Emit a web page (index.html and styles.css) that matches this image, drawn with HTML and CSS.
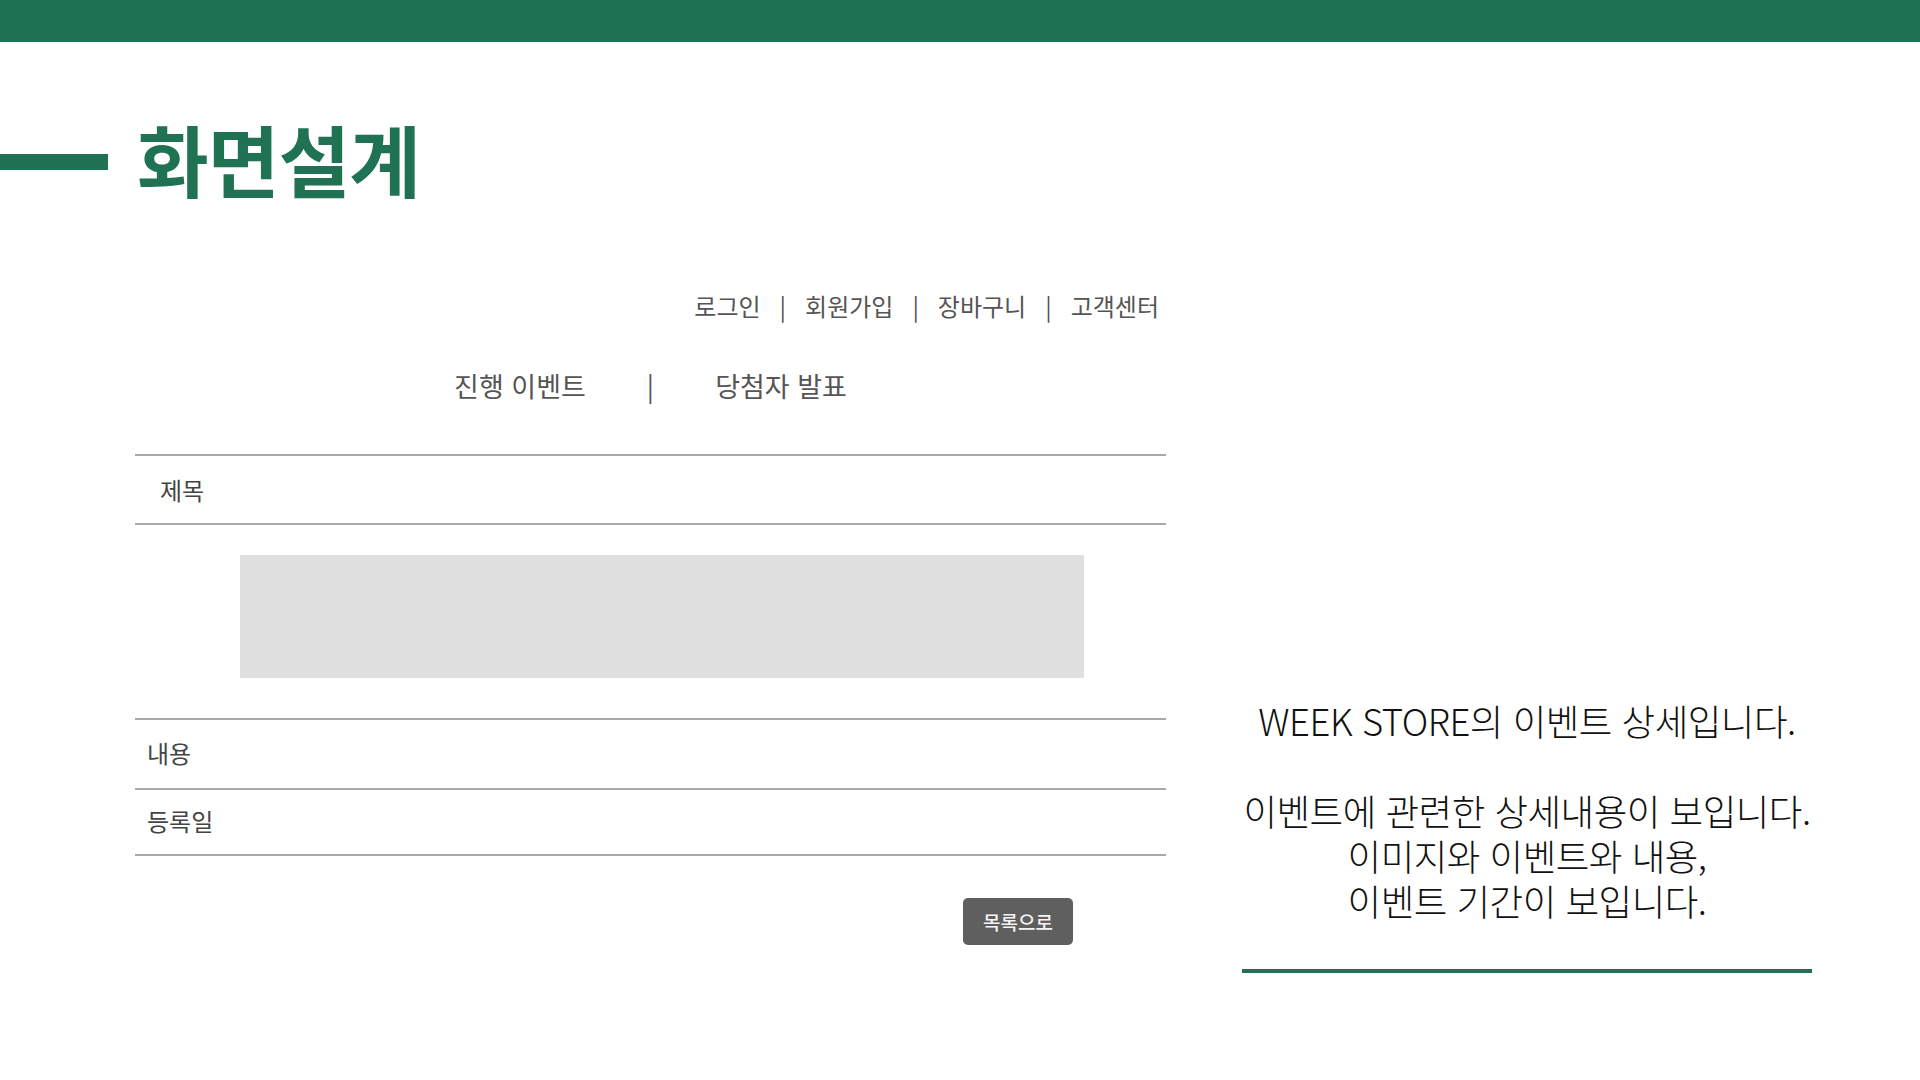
FILE: index.html
```html
<!DOCTYPE html>
<html lang="ko">
<head>
<meta charset="utf-8">
<title>화면설계</title>
<link rel="stylesheet" href="styles.css">
</head>
<body>
<div class="topbar"></div>
<div class="title-row">
  <span class="dash"></span>
  <h1 class="page-title">화면설계</h1>
</div>
<div class="main">
  <section class="wire">
    <nav class="util">
      <span>로그인</span><span class="sep">|</span><span>회원가입</span><span class="sep">|</span><span>장바구니</span><span class="sep">|</span><span>고객센터</span>
    </nav>
    <nav class="tabs">
      <span>진행 이벤트</span><span class="tab-sep">|</span><span>당첨자 발표</span>
    </nav>
    <div class="board">
      <div class="row row-subject">제목</div>
      <div class="row row-image"><div class="image-box"></div></div>
      <div class="row row-content">내용</div>
      <div class="row row-date">등록일</div>
    </div>
    <div class="actions">
      <button class="btn-list" type="button">목록으로</button>
    </div>
  </section>
  <aside class="desc">
    <p class="desc-text">WEEK STORE의 이벤트 상세입니다.<br><br>이벤트에 관련한 상세내용이 보입니다.<br>이미지와 이벤트와 내용,<br>이벤트 기간이 보입니다.</p>
    <div class="desc-line"></div>
  </aside>
</div>
</body>
</html>
```
FILE: styles.css
```css
* { box-sizing: border-box; }
html, body { margin: 0; padding: 0; background: #ffffff; }
body {
  width: 1920px;
  height: 1080px;
  overflow: hidden;
  font-family: "Noto Sans CJK KR", "Noto Sans", sans-serif;
  color: #333;
}
.topbar { height: 42px; background: #1f7252; }

.title-row {
  display: flex;
  align-items: center;
  height: 80px;
  margin-top: 76px;
}
.dash {
  display: block;
  width: 108px;
  height: 16px;
  background: #1f7252;
  margin-top: 8px;
}
.page-title {
  margin: 0 0 0 29px;
  font-size: 78px;
  line-height: 80px;
  font-weight: 700;
  letter-spacing: -1px;
  color: #1f7252;
}

.main { display: flex; align-items: flex-start; }

.wire { width: 1031px; margin-left: 135px; }

.util {
  display: flex;
  justify-content: flex-end;
  margin-top: 92px;
  padding-right: 7px;
  height: 32px;
  line-height: 32px;
  font-size: 24px;
  color: #555;
}
.util .sep { margin: 0 19px; }

.tabs {
  display: flex;
  justify-content: center;
  margin-top: 46px;
  height: 36px;
  line-height: 36px;
  font-size: 27px;
  color: #555;
}
.tabs .tab-sep { margin: 0 61px; }

.board { margin-top: 50px; border-bottom: 2px solid #a9a9a9; }
.row { border-top: 2px solid #a9a9a9; font-size: 24px; color: #444; }
.row-subject { height: 69px; line-height: 67px; padding-left: 25px; }
.row-image { height: 195px; padding-top: 30px; }
.image-box { width: 844px; height: 123px; margin-left: 105px; background: #dfdfdf; }
.row-content { height: 70px; line-height: 66px; padding-left: 12px; }
.row-date { height: 66px; line-height: 62px; padding-left: 12px; }

.actions { display: flex; justify-content: flex-end; padding-right: 93px; margin-top: 42px; }
.btn-list {
  width: 110px;
  height: 47px;
  border: 0;
  border-radius: 5px;
  background: #5f5f5f;
  color: #f4f4f4;
  font-family: "Noto Sans CJK KR", sans-serif;
  font-size: 19px;
  font-weight: 500;
  padding: 0;
}

.desc { width: 570px; margin-left: 76px; padding-top: 500px; }
.desc-text {
  margin: 0;
  text-align: center;
  font-size: 36.5px;
  font-weight: 300;
  line-height: 45px;
  letter-spacing: -0.5px;
  color: #111;
}
.desc-line { height: 4px; background: #246f52; margin-top: 46px; }
```
